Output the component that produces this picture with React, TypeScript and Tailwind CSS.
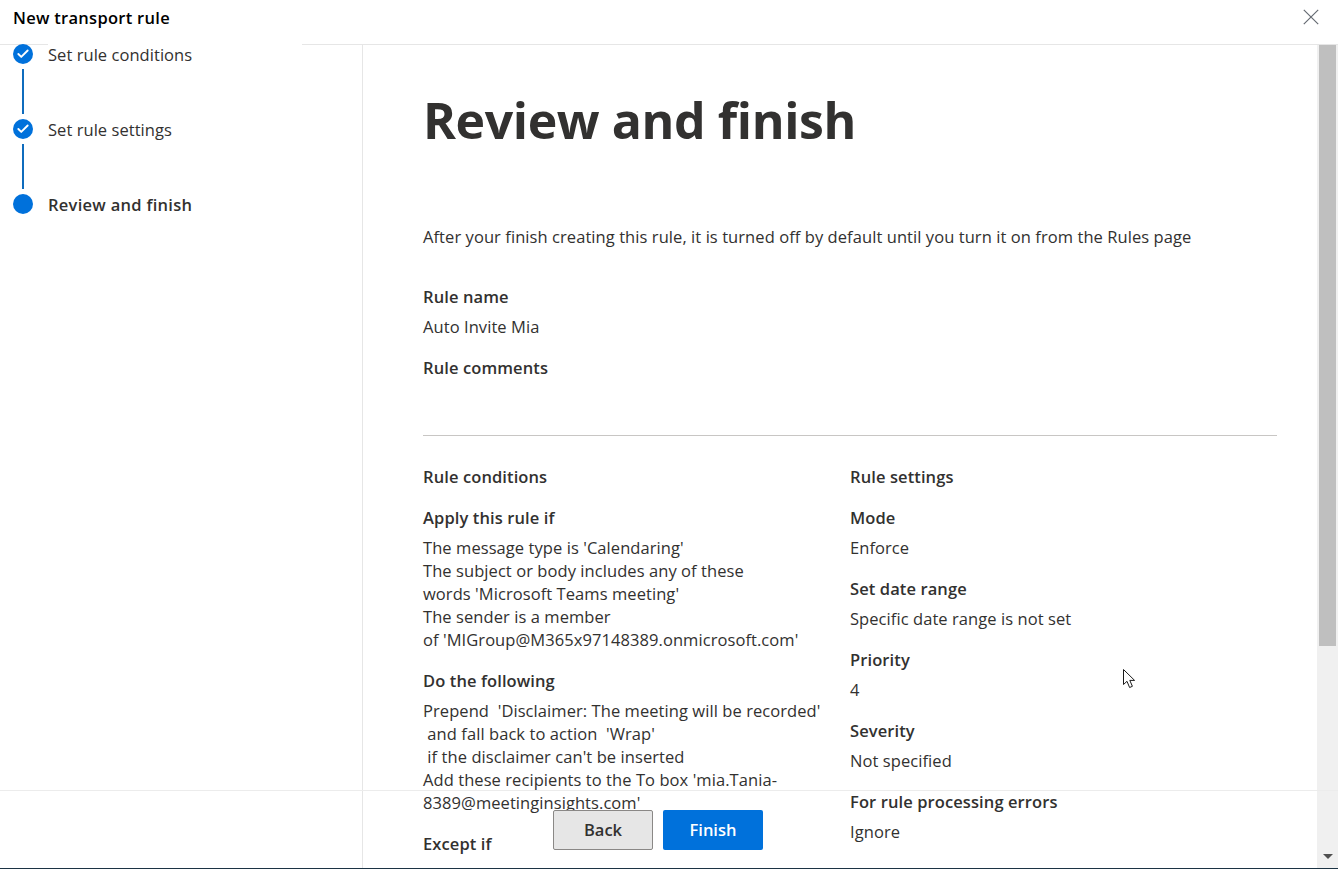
import React from 'react';
import { Check } from 'lucide-react';

const font = "font-['Open_Sans','Noto_Sans',sans-serif]";

const StepLine = () => <div className="my-[5px] ml-[9px] h-[45px] w-[2px] bg-[#0f6cbd]" />;

const Step: React.FC<{ label: string; done?: boolean }> = ({ label, done }) => (
  <div className="flex h-[20px] items-center">
    <div className="flex h-[20px] w-[20px] items-center justify-center rounded-full bg-[#0071db]">
      {done && <Check size={14} strokeWidth={3.2} className="text-white" />}
    </div>
    <span className={`ml-[15px] pt-[2px] text-[16.5px] text-[#323130] ${done ? 'tracking-[0.05px]' : 'font-semibold tracking-[0.28px]'}`}>
      {label}
    </span>
  </div>
);

const Label: React.FC<{ children: React.ReactNode; className?: string }> = ({ children, className }) => (
  <div className={`text-[16.5px] leading-[23px] font-semibold tracking-[0.1px] text-[#323130] ${className ?? ''}`}>{children}</div>
);

const Body: React.FC<{ children: React.ReactNode; className?: string }> = ({ children, className }) => (
  <div className={`text-[16.5px] leading-[23px] tracking-[0.07px] text-[#323130] whitespace-pre-wrap ${className ?? ''}`}>{children}</div>
);

export default function App() {
  return (
    <div className={`relative flex h-[869px] w-[1338px] flex-col overflow-hidden bg-white ${font}`}>
      {/* Header */}
      <div className="flex h-[45px] shrink-0 items-start justify-between border-b border-[#e6e6e6]">
        <div className="pl-[13px] pt-[6px] text-[16.5px] leading-[23px] font-semibold tracking-[0.28px] text-black">New transport rule</div>
        <button className="mr-[19px] mt-[9px]">
          <svg width="16" height="16" viewBox="0 0 16 16" fill="none" stroke="#666b73" strokeWidth="1.2">
            <path d="M0.8 0.8 15.2 15.2M15.2 0.8 0.8 15.2" />
          </svg>
        </button>
      </div>

      <div className="flex min-h-0 flex-1">
        {/* Steps */}
        <div className="w-[363px] shrink-0 border-r border-[#e6e6e6] pl-[13px]">
          <div className="-mt-px">
            <Step label="Set rule conditions" done />
            <StepLine />
            <Step label="Set rule settings" done />
            <StepLine />
            <Step label="Review and finish" />
          </div>
        </div>

        {/* Content */}
        <div className="min-w-0 flex-1 overflow-hidden pl-[60px] pr-[40px]">
          <h1 className="pt-[37px] text-[50px] leading-[76px] font-bold tracking-[-0.4px] text-[#323130]">Review and finish</h1>
          <Body className="mt-[67px]">After your finish creating this rule, it is turned off by default until you turn it on from the Rules page</Body>
          <Label className="mt-[37px]">Rule name</Label>
          <Body className="mt-[7px]">Auto Invite Mia</Body>
          <Label className="mt-[18px]">Rule comments</Label>
          <div className="mt-[56px] h-px bg-[#c8c6c4]" />

          <div className="mt-[29px] grid grid-cols-2">
            <div>
              <Label>Rule conditions</Label>
              <Label className="mt-[18px]">Apply this rule if</Label>
              <Body className="mt-[7px]">
                The message type is 'Calendaring'{'\n'}The subject or body includes any of these{'\n'}words 'Microsoft Teams meeting'{'\n'}The sender is a member{'\n'}of 'MIGroup@M365x97148389.onmicrosoft.com'
              </Body>
              <Label className="mt-[18px]">Do the following</Label>
              <Body className="mt-[7px]">
                Prepend  'Disclaimer: The meeting will be recorded'{'\n'} and fall back to action  'Wrap'{'\n'} if the disclaimer can't be inserted{'\n'}Add these recipients to the To box 'mia.Tania-{'\n'}8389@meetinginsights.com'
              </Body>
              <Label className="mt-[18px]">Except if</Label>
              <Body className="mt-[7px]">The message type is</Body>
            </div>
            <div>
              <Label>Rule settings</Label>
              <Label className="mt-[18px]">Mode</Label>
              <Body className="mt-[7px]">Enforce</Body>
              <Label className="mt-[18px]">Set date range</Label>
              <Body className="mt-[7px]">Specific date range is not set</Body>
              <Label className="mt-[18px]">Priority</Label>
              <Body className="mt-[7px]">4</Body>
              <Label className="mt-[18px]">Severity</Label>
              <Body className="mt-[7px]">Not specified</Body>
              <Label className="mt-[18px]">For rule processing errors</Label>
              <Body className="mt-[7px]">Ignore</Body>
              <Label className="mt-[20px]">Sender address to match</Label>
            </div>
          </div>
        </div>

        {/* Scrollbar */}
        <div className="flex w-[21px] shrink-0 flex-col items-center bg-[#f0f0f0]">
          <div className="h-[601px] w-[17px] bg-[#bfbfbf]" />
          <div className="flex-1" />
          <div className="mb-[9px] h-0 w-0 border-x-[5px] border-t-[5px] border-x-transparent border-t-[#505050]" />
        </div>
      </div>

      <div className="h-px shrink-0 bg-[#1c3344]" />

      {/* Gap in the header rule above the steps */}
      <div className="absolute left-[48px] top-[44px] h-px w-[254px] bg-white" />

      {/* Footer floats over the scrolling content */}
      <div className="absolute inset-x-0 top-[790px] flex h-[78px] justify-center gap-[10px] border-t border-[#ececec] pr-[22px] pt-[19px]">
        <button className="h-[40px] w-[100px] rounded-[2px] border border-[#8a8886] bg-[#e6e6e6] text-[16.5px] font-semibold text-[#323130]">Back</button>
        <button className="h-[40px] w-[100px] rounded-[2px] bg-[#0071db] text-[16.5px] font-semibold text-white">Finish</button>
      </div>

      {/* Mouse pointer */}
      <svg className="absolute left-[1123px] top-[669px]" width="13" height="20" viewBox="0 0 13 20" fill="white" stroke="#1a1a1a" strokeWidth="1">
        <path d="M0.5 0.5V15.5L4 12.3 6.6 18.5 9.4 17.3 6.8 11.4H11.6Z" />
      </svg>
    </div>
  );
}
